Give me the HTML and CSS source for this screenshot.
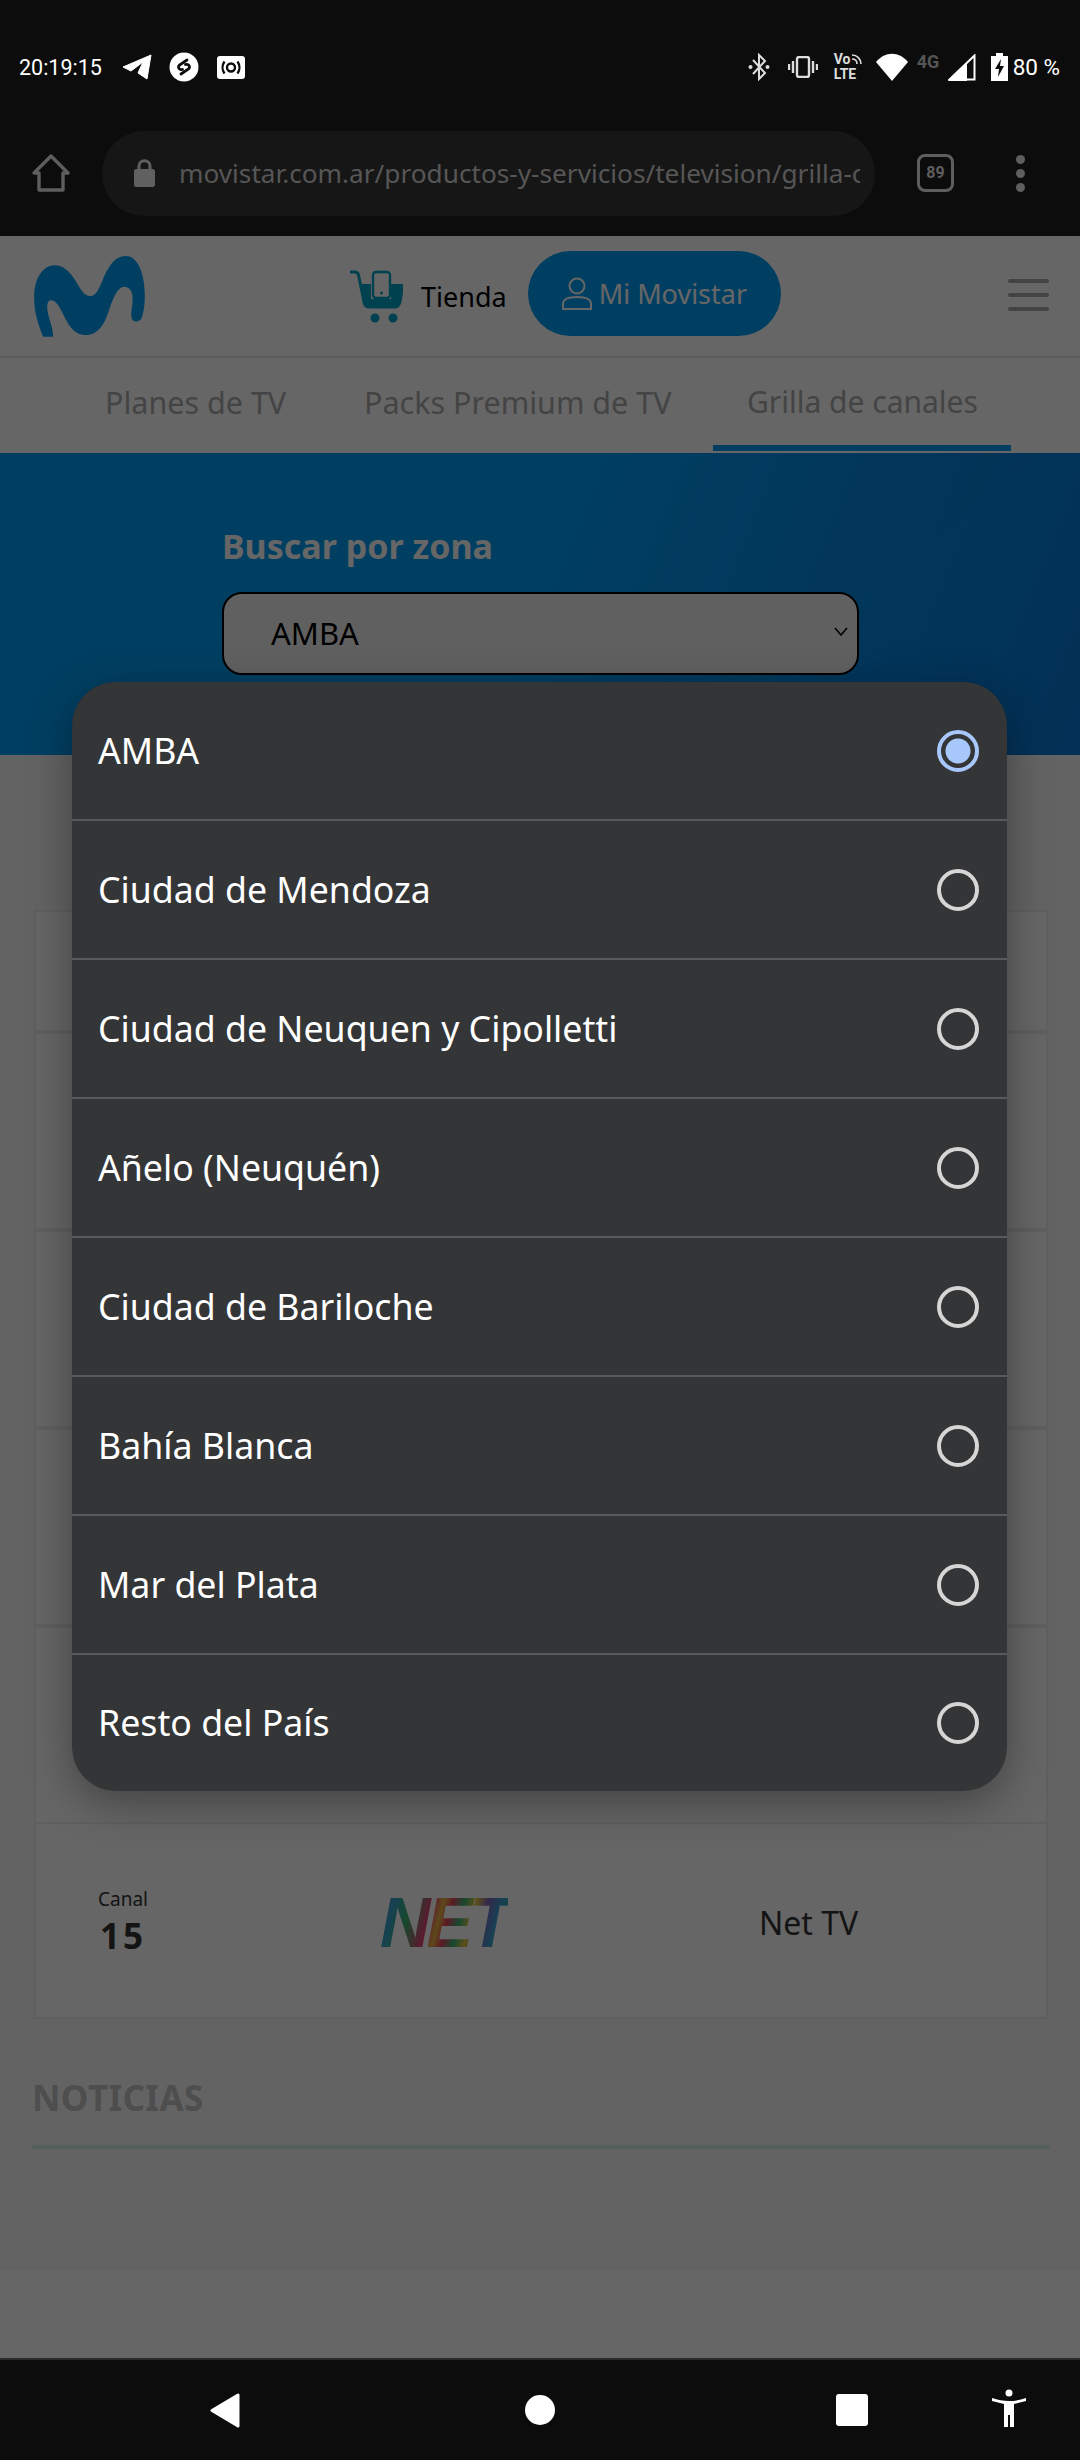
FILE: index.html
```html
<!DOCTYPE html>
<html lang="es">
<head>
<meta charset="utf-8"/>
<title>Grilla de canales</title>
<link rel="stylesheet" href="styles.css">
</head>
<body>
<div class="phone">

  <!-- Status bar -->
  <div class="statusbar">
    <div class="status-left">
      <span class="clock">20:19:15</span>
      <svg class="st-telegram" viewBox="0 0 30 26"><path d="M1 13 L29 1 L25 25 L16 19 L21 8 L9 17 Z" fill="#fff" stroke="#fff" stroke-linejoin="round"/></svg>
      <svg class="st-shazam" viewBox="0 0 30 30"><circle cx="15" cy="15" r="14.5" fill="#fff"/><path d="M18 8 L10.500 13 C8.500 15 10 18.500 13.500 17.500 M12 22 L19.500 17 C21.500 15 20 11.500 16.500 12.500" fill="none" stroke="#0c0c0c" stroke-width="2.800" stroke-linecap="round"/></svg>
      <svg class="st-cast" viewBox="0 0 28 23"><rect x="0" y="0" width="28" height="23" rx="3" fill="#fff"/><circle cx="14" cy="11.5" r="4" fill="none" stroke="#0c0c0c" stroke-width="2.4"/><path d="M7.5 5.5 C5 9 5 14 7.5 17.5 M20.5 5.5 C23 9 23 14 20.5 17.5" fill="none" stroke="#0c0c0c" stroke-width="2.4"/></svg>
    </div>
    <div class="status-right">
      <svg class="st-bt" viewBox="0 0 22 28"><path d="M5 7 L17 20 L11 26 L11 2 L17 8 L5 21" fill="none" stroke="#ddd" stroke-width="2"/><circle cx="2.5" cy="14" r="2" fill="#ddd"/><circle cx="19.5" cy="14" r="2" fill="#ddd"/></svg>
      <svg class="st-vib" viewBox="0 0 30 22"><rect x="9" y="1" width="12" height="20" rx="2" fill="none" stroke="#ddd" stroke-width="2.4"/><path d="M5 5 V17 M1 8 V14 M25 5 V17 M29 8 V14" stroke="#ddd" stroke-width="2.4"/></svg>
      <div class="st-volte">
        <div class="volte-top">Vo<svg class="volte-arcs" viewBox="0 0 11 11"><path d="M1 1 C6 1 10 5 10 10 M1 5 C4 5 6 7 6 10" fill="none" stroke="#ddd" stroke-width="1.600"/></svg></div>
        <span>LTE</span>
      </div>
      <svg class="st-wifi" viewBox="0 0 32 28"><path d="M0 9 C9 -2 23 -2 32 9 L16 28 Z" fill="#fff"/></svg>
      <span class="st-4g">4G</span>
      <svg class="st-signal" viewBox="0 0 28 27"><path d="M1.5 25.5 L26.5 1.5 V25.5 Z" fill="none" stroke="#fff" stroke-width="2"/><path d="M0 27 L19 8.5 V27 Z" fill="#fff"/></svg>
      <svg class="st-batt" viewBox="0 0 17 28"><path d="M5 0 H12 V3 H17 V28 H0 V3 H5 Z" fill="#fff"/><path d="M10 6 L4 16 H8 L7 24 L13 13 H9 Z" fill="#0c0c0c"/></svg>
      <span class="st-pct">80 %</span>
    </div>
  </div>

  <!-- Browser toolbar -->
  <div class="toolbar">
    <svg class="tb-home" viewBox="0 0 38 38"><path d="M19 2 L36 19 H31 V36 H7 V19 H2 Z" fill="none" stroke="#5e5e5e" stroke-width="3.4" stroke-linejoin="round"/></svg>
    <div class="urlbar">
      <svg class="tb-lock" viewBox="0 0 21 28"><path d="M5 11 V7 C5 0 16 0 16 7 V11" fill="none" stroke="#606060" stroke-width="3"/><rect x="0" y="10" width="21" height="18" rx="2.5" fill="#606060"/></svg>
      <span class="url">movistar.com.ar/productos-y-servicios/television/grilla-c</span>
    </div>
    <div class="tabcount">89</div>
    <div class="tb-menu"><i></i><i></i><i></i></div>
  </div>

  <!-- Web page -->
  <div class="page">
    <header class="site-head">
      <svg class="logo" viewBox="103 45 332 243"><path d="M130 287 C115 250 103 215 103 170 C103 110 130 73 165 73 C200 73 222 110 240 140 C250 157 260 165 272 165 C285 165 295 150 305 125 C325 75 345 45 378 45 C415 45 435 100 435 165 C435 190 432 215 425 232 C418 245 400 245 395 230 C392 215 400 190 398 165 C396 145 385 137 372 137 C355 137 340 170 330 200 C315 250 295 282 258 282 C220 282 205 250 185 210 C175 190 165 177 152 178 C142 179 140 195 145 220 C150 240 160 265 160 287 Z" fill="#019df4"/></svg>
      <svg class="cart" viewBox="0 0 54 53"><path d="M1 2 H6 C8 2 9 3 9.500 5 L15 32 C15.500 35 17 37 20 37 H46 C49 37 50 35 51 32 L54 14" fill="none" stroke="#00a3c8" stroke-width="3"/><path d="M12 14 H22 V29 H42 V14 H54 L51 33 C50 36 49 37 46 37 H20 C17 37 16 36 15 33 Z" fill="#00a3c8"/><rect x="24" y="2" width="17" height="26" rx="3" fill="none" stroke="#00a3c8" stroke-width="2.400"/><circle cx="32.500" cy="23" r="1.500" fill="#00a3c8"/><circle cx="26" cy="48" r="4.500" fill="#00a3c8"/><circle cx="44" cy="48" r="4.500" fill="#00a3c8"/></svg>
      <span class="tienda">Tienda</span>
      <a class="login">
        <svg class="login-ico" viewBox="0 0 30 33"><circle cx="15" cy="9" r="7.500" fill="none" stroke="#fff" stroke-width="2"/><path d="M1 32 V27 C1 22 6 20 15 20 C24 20 29 22 29 27 V32 Z" fill="none" stroke="#fff" stroke-width="2"/></svg>
        Mi Movistar
      </a>
      <div class="burger"><i></i><i></i><i></i></div>
    </header>

    <nav class="tabs">
      <a class="tab tab-plans">Planes de TV</a>
      <a class="tab tab-packs">Packs Premium de TV</a>
      <a class="tab tab-grid active">Grilla de canales</a>
    </nav>

    <section class="hero">
      <h3 class="hero-title">Buscar por zona</h3>
      <div class="fake-select">
        AMBA
        <svg class="chev" viewBox="0 0 14 9"><path d="M1 1 L7 8 L13 1" fill="none" stroke="#000" stroke-width="1.600"/></svg>
      </div>
    </section>

    <section class="channels">
      <div class="channel first"></div>
      <div class="channel"></div>
      <div class="channel"></div>
      <div class="channel"></div>
      <div class="channel"></div>
      <div class="channel last">
        <div class="ch-num"><small>Canal</small><b>15</b></div>
        <div class="ch-logo-wrap"><span class="ch-logo">NET</span></div>
        <div class="ch-name">Net TV</div>
      </div>
    </section>

    <section class="news">
      <h3>NOTICIAS</h3>
      <div class="news-line"></div>
    </section>

    <div class="filler"></div>
    <div class="site-foot"></div>

    <div class="scrim"></div>

    <!-- Select popup -->
    <ul class="sheet">
      <li class="opt selected"><span>AMBA</span><i class="radio"></i></li>
      <li class="opt"><span>Ciudad de Mendoza</span><i class="radio"></i></li>
      <li class="opt"><span>Ciudad de Neuquen y Cipolletti</span><i class="radio"></i></li>
      <li class="opt"><span>Añelo (Neuquén)</span><i class="radio"></i></li>
      <li class="opt"><span>Ciudad de Bariloche</span><i class="radio"></i></li>
      <li class="opt"><span>Bahía Blanca</span><i class="radio"></i></li>
      <li class="opt"><span>Mar del Plata</span><i class="radio"></i></li>
      <li class="opt"><span>Resto del País</span><i class="radio"></i></li>
    </ul>
  </div>

  <!-- Nav bar -->
  <div class="navbar">
    <svg class="nv-back" viewBox="0 0 30 35"><path d="M28 2 V33 L2 17.500 Z" fill="#fff" stroke="#fff" stroke-width="3" stroke-linejoin="round"/></svg>
    <div class="nv-home"></div>
    <div class="nv-recent"></div>
    <svg class="nv-a11y" viewBox="0 0 34 38"><circle cx="17" cy="4" r="3.500" fill="#fff"/><path d="M0 9 C6 11 11 12 17 12 C23 12 28 11 34 9 L34 12 L22 15 V38 H18 V26 H16 V38 H12 V15 L0 12 Z" fill="#fff"/></svg>
  </div>

</div>
</body>
</html>
```

FILE: styles.css
```css
*{margin:0;padding:0;box-sizing:border-box}
body{
  background:#0c0c0c;
  font-family:"Noto Sans",sans-serif;
}
.phone{
  width:1080px;
  height:2460px;
  display:flex;
  flex-direction:column;
  overflow:hidden;
}
svg{display:block;flex:none}

/* status bar */
.statusbar{
  height:134px;
  background:#0c0c0c;
  color:#fff;
  display:flex;
  align-items:center;
  justify-content:space-between;
  padding:0 20px 0 19px;
}
.status-left,.status-right{display:flex;align-items:center}
.clock{font-family:Roboto,sans-serif;font-size:21.500px;width:103px}
.st-telegram{width:30px;height:26px}
.st-shazam{width:30px;height:30px;margin-left:17px}
.st-cast{width:28px;height:23px;margin-left:18px}
.st-bt{width:22px;height:28px}
.st-vib{width:30px;height:22px;margin-left:18px}
.st-volte{
  width:32px;
  margin-left:16px;
  font:700 14px/15px Roboto,sans-serif;
  color:#ddd;
  display:flex;
  flex-direction:column;
}
.volte-top{display:flex;align-items:center;gap:1px}
.volte-arcs{width:11px;height:11px}
.st-wifi{width:32px;height:28px;margin-left:10px}
.st-4g{font:700 18px/1 Roboto,sans-serif;color:#555;width:26px;margin:0 0 10px 9px}
.st-signal{width:28px;height:27px;margin-left:5px}
.st-batt{width:17px;height:28px;margin-left:15px}
.st-pct{font:22.500px Roboto,sans-serif;margin-left:5px}

/* browser toolbar */
.toolbar{
  height:102px;
  background:#0c0c0c;
  display:flex;
  align-items:center;
  padding-bottom:24px;
  padding-left:32px;
}
.tb-home{width:38px;height:38px}
.urlbar{
  width:773px;
  height:85px;
  margin-left:32px;
  border-radius:42px;
  background:#161616;
  display:flex;
  align-items:center;
  padding:0 15px 0 32px;
}
.tb-lock{width:21px;height:28px}
.url{
  margin-left:24px;
  width:681px;
  overflow:hidden;
  font-size:26.200px;
  color:#565656;
  white-space:nowrap;
}
.tabcount{
  width:37px;
  height:38px;
  margin-left:42px;
  border:3.500px solid #5e5e5e;
  border-radius:8px;
  font:700 16px/31px Roboto,sans-serif;
  color:#5e5e5e;
  text-align:center;
}
.tb-menu{
  margin-left:62px;
  display:flex;
  flex-direction:column;
  gap:5px;
}
.tb-menu i{width:9px;height:9px;border-radius:50%;background:#5e5e5e}

/* page, colours are the ones below the scrim */
.page{
  position:relative;
  flex:1;
  background:#f8f8f8;
  display:flex;
  flex-direction:column;
  overflow:hidden;
}
.site-head{
  height:122px;
  background:#fff;
  border-bottom:2px solid #e8e8e8;
  display:flex;
  align-items:center;
  padding-left:34px;
}
.logo{width:111px;height:81px}
.cart{width:54px;height:53px;margin-left:204px}
.tienda{font-size:27px;color:#000;margin-left:18px}
.login{
  width:253px;
  height:85px;
  margin:-6px 0 0 21px;
  border-radius:43px;
  background:#019df4;
  color:#fff;
  font-size:27px;
  display:flex;
  align-items:center;
  padding-left:34px;
  gap:7px;
}
.login-ico{width:30px;height:33px}
.burger{margin-left:227px;display:flex;flex-direction:column;gap:10px;margin-top:-2px}
.burger i{width:41px;height:4px;background:#aaa;border-radius:2px}

.tabs{
  height:95px;
  background:#fff;
  display:flex;
}
.tab{
  font-size:30.500px;
  line-height:88px;
  color:#aaa;
}
.tab-plans{margin-left:105px;width:259px}
.tab-packs{width:383px}
.tab-grid{
  width:298px;
  height:93px;
  margin-left:-34px;
  padding-left:34px;
  font-size:30px;
  border-bottom:6px solid #019df4;
}

.hero{
  height:302px;
  background:
    linear-gradient(140deg,transparent 72%,rgba(0,150,255,.12) 72%),
    linear-gradient(112deg,#019df4 0%,#019df4 50%,#0a74d0 100%);
  padding:73px 0 0 222px;
}
.hero-title{font-size:34px;line-height:40px;color:#fff;font-weight:700}
.fake-select{
  position:relative;
  width:637px;
  height:83px;
  margin-top:26px;
  background:#f0f0f0;
  border:2px solid #000;
  border-radius:20px;
  font-size:31px;
  line-height:79px;
  padding-left:47px;
  color:#000;
}
.chev{position:absolute;right:9px;top:33px;width:14px;height:9px}

.channels{margin:155px 32px 0 34px}
.channel{height:198px;background:#fff;border:2px solid #eee}
.channel.first{height:122px}
.channel.last{
  height:195px;
  display:flex;
  align-items:center;
  padding:4px 0 0 62px;
  border-top:0;
}
.ch-num{width:134px;display:flex;flex-direction:column;color:#333}
.ch-num small{font-size:19px;line-height:26px}
.ch-num b{font-size:35px;line-height:48px;letter-spacing:3px;padding-left:2px}
.ch-logo-wrap{width:529px;padding-left:148px}
.ch-logo{
  display:inline-block;
  font:italic 900 70px/1 "Liberation Sans",sans-serif;
  letter-spacing:-4px;
  color:transparent;
  opacity:.85;
  background:linear-gradient(105deg,#5a4fa8 0,#1495c8 12%,#18a850 24%,#e02060 38%,#e8a820 46%,#e02040 52%,#18a860 60%,#e8c020 68%,#6a4cb0 76%,#1495c8 86%,#18a840 100%);
  -webkit-background-clip:text;
  background-clip:text;
}
.ch-name{font-size:32px;color:#333;margin-left:-2px}

.news{margin:58px 30px 0 32px}
.news h3{font-size:35px;line-height:42px;font-weight:700;color:#c2c2c2;letter-spacing:.4px}
.news-line{height:4px;margin-top:26px;background:#d4eeec}
.filler{flex:1}
.site-foot{height:88px;background:#fff}

.scrim{
  position:absolute;
  inset:0;
  background:rgba(0,0,0,.6);
}

/* select popup */
.sheet{
  position:absolute;
  left:72px;
  top:446px;
  width:935px;
  list-style:none;
  background:#343537;
  border-radius:44px;
  box-shadow:0 12px 44px rgba(0,0,0,.35);
}
.opt{
  height:139px;
  display:flex;
  align-items:center;
  justify-content:space-between;
  padding:0 28px 0 26px;
  font-size:35.700px;
  color:#fff;
  border-bottom:2px solid #58595b;
}
.opt span{margin-top:-2px}
.opt:last-child{border-bottom:0;height:136px}
.radio{
  width:42px;
  height:42px;
  border-radius:50%;
  border:4px solid #d6d6d6;
}
.selected .radio{
  border-color:#a8c7fa;
  background:radial-gradient(circle,#a8c7fa 12px,transparent 13px);
}

/* nav bar */
.navbar{
  height:102px;
  background:#0c0c0c;
  border-top:2px solid #2a2a2a;
  display:flex;
  align-items:center;
  padding-left:210px;
}
.nv-back{width:30px;height:35px}
.nv-home{width:30px;height:30px;border-radius:50%;background:#fff;margin-left:285px}
.nv-recent{width:32px;height:32px;border-radius:3px;background:#fff;margin-left:281px}
.nv-a11y{width:34px;height:38px;margin:-4px 0 0 124px}
```
